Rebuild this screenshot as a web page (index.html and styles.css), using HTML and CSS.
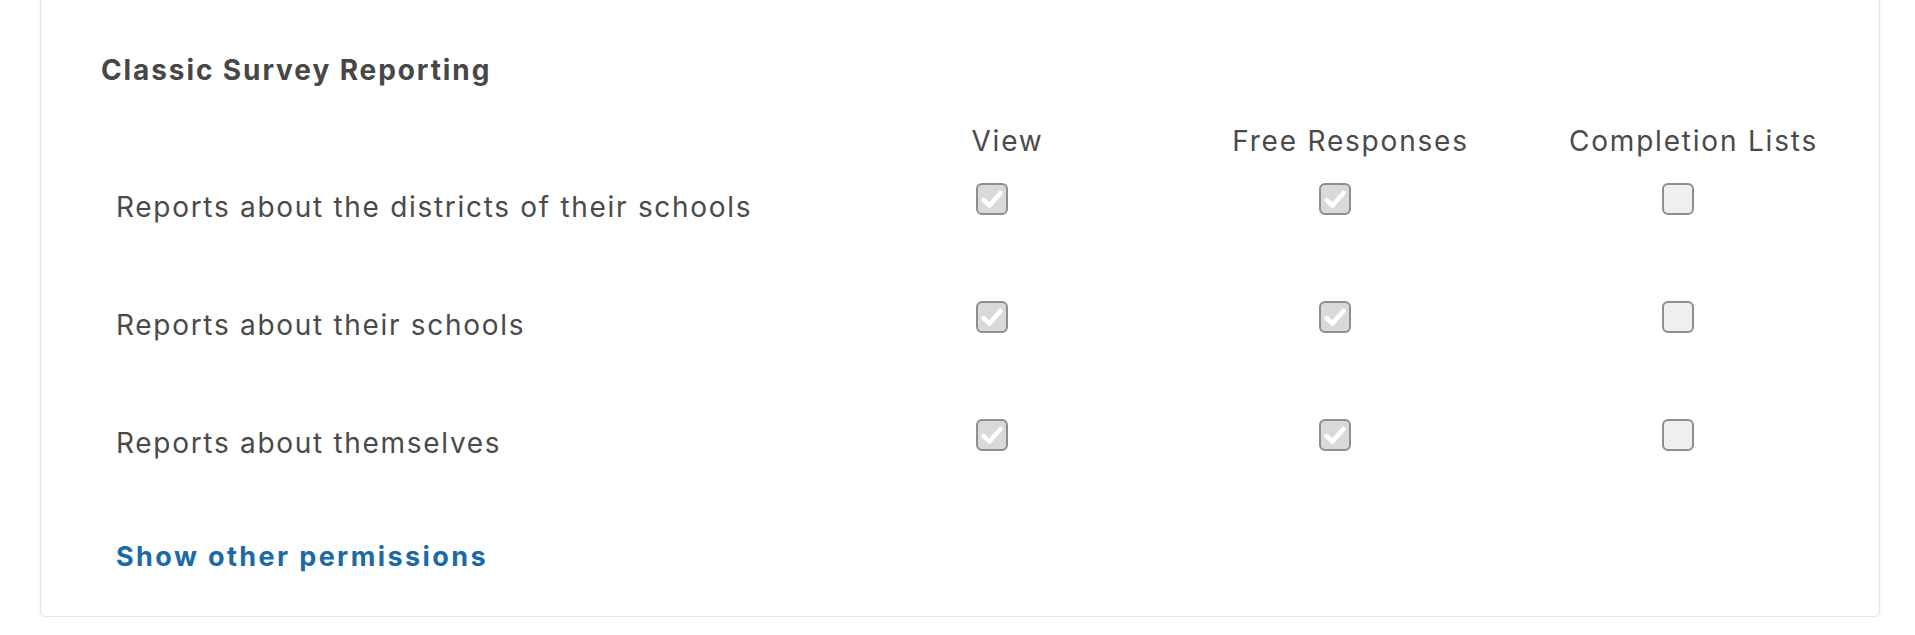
FILE: index.html
```html
<!DOCTYPE html>
<html>
<head>
    <link rel="stylesheet" href="styles.css">
</head>
<body>
    <div class="card">
        <h2 class="section-title">Classic Survey Reporting</h2>

        <div class="perm-table">
            <div class="perm-row perm-head">
                <div class="perm-label"></div>
                <div class="perm-col">View</div>
                <div class="perm-col">Free Responses</div>
                <div class="perm-col">Completion Lists</div>
            </div>

            <div class="perm-row">
                <div class="perm-label">Reports about the districts of their schools</div>
                <div class="perm-cell"><span class="box checked"><svg viewBox="0 0 28 28"><path d="M5.5 15 L11.5 20.5 L22.5 8"/></svg></span></div>
                <div class="perm-cell"><span class="box checked"><svg viewBox="0 0 28 28"><path d="M5.5 15 L11.5 20.5 L22.5 8"/></svg></span></div>
                <div class="perm-cell"><span class="box"></span></div>
            </div>

            <div class="perm-row">
                <div class="perm-label">Reports about their schools</div>
                <div class="perm-cell"><span class="box checked"><svg viewBox="0 0 28 28"><path d="M5.5 15 L11.5 20.5 L22.5 8"/></svg></span></div>
                <div class="perm-cell"><span class="box checked"><svg viewBox="0 0 28 28"><path d="M5.5 15 L11.5 20.5 L22.5 8"/></svg></span></div>
                <div class="perm-cell"><span class="box"></span></div>
            </div>

            <div class="perm-row">
                <div class="perm-label">Reports about themselves</div>
                <div class="perm-cell"><span class="box checked"><svg viewBox="0 0 28 28"><path d="M5.5 15 L11.5 20.5 L22.5 8"/></svg></span></div>
                <div class="perm-cell"><span class="box checked"><svg viewBox="0 0 28 28"><path d="M5.5 15 L11.5 20.5 L22.5 8"/></svg></span></div>
                <div class="perm-cell"><span class="box"></span></div>
            </div>
        </div>

        <a class="show-more" href="#">Show other permissions</a>
    </div>
</body>
</html>
```

FILE: styles.css
```css
* {
    margin: 0;
    padding: 0;
    box-sizing: border-box;
}

body {
    background: #fff;
    font-family: 'Inter', 'Liberation Sans', sans-serif;
    color: #4a4a4a;
    overflow: hidden;
}

.card {
    width: 1840px;
    margin: -20px 0 0 40px;
    padding: 71px 0 41px 60px;
    background: #fff;
    border: 1px solid #e6e6e6;
    border-radius: 6px;
    box-shadow: 0 2px 4px rgba(0, 0, 0, 0.07);
}

.section-title {
    font-size: 28px;
    line-height: 36px;
    font-weight: 700;
    letter-spacing: 1.9px;
    color: #474747;
}

.perm-table {
    margin-top: 35px;
    padding-left: 15px;
}

.perm-row {
    display: grid;
    grid-template-columns: 720px 343px 343px 343px;
    height: 118px;
    font-size: 28px;
    line-height: 36px;
    letter-spacing: 1.7px;
}

.perm-head {
    height: 60px;
    letter-spacing: 1.8px;
}

.perm-col {
    text-align: center;
}

.perm-label {
    padding-top: 6px;
}

.perm-head .perm-label {
    padding-top: 0;
}

.perm-cell {
    display: flex;
    justify-content: center;
}

.box {
    width: 32px;
    height: 32px;
    margin-right: 32px;
    border: 2px solid #8e8e8e;
    border-radius: 6px;
    background: #efefef;
}

.box.checked {
    background: #d9d9d9;
}

.box svg {
    display: block;
    width: 28px;
    height: 28px;
}

.box svg path {
    fill: none;
    stroke: #fff;
    stroke-width: 4.5;
    stroke-linecap: round;
    stroke-linejoin: round;
}

.show-more {
    display: inline-block;
    margin: 2px 0 0 15px;
    font-size: 27px;
    line-height: 36px;
    font-weight: 700;
    letter-spacing: 2.4px;
    color: #1b6aa6;
    text-decoration: none;
}
```
